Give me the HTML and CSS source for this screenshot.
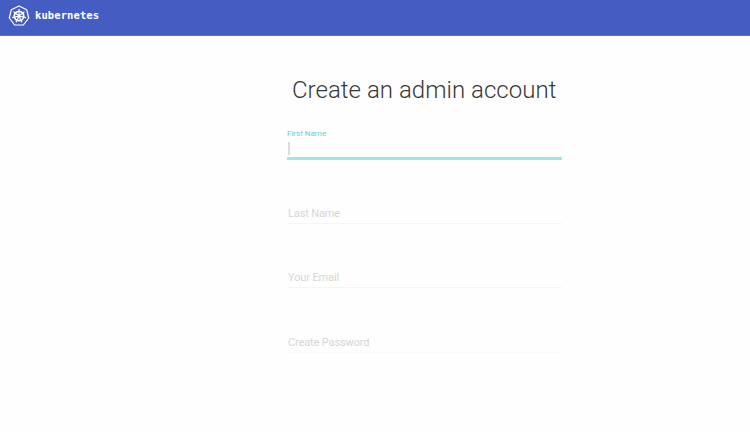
FILE: index.html
```
<!DOCTYPE html>
<html lang="en">
<head>
<meta charset="utf-8">
<title>Create an admin account</title>
<link rel="stylesheet" href="styles.css">
</head>
<body>
<header class="topbar">
  <svg class="logo" viewBox="0 0 22 22" fill="none" stroke="#fff" stroke-linejoin="round">
    <path d="M11 1 18.7 4.7 20.7 13 15.4 20H6.6L1.3 13 3.3 4.7Z" stroke-width="1.2"/>
    <circle cx="11" cy="11" r="4.7" stroke-width="1.7"/>
    <path d="M11 4V11M16.5 6.6 11 11M17.9 12.6 11 11M14 17.3 11 11M8 17.3 11 11M4.1 12.6 11 11M5.5 6.6 11 11" stroke-width="1.2"/>
  </svg>
  <span class="brand">kubernetes</span>
</header>
<main class="form">
  <h1 class="title">Create an admin account</h1>
  <div class="field active">
    <span class="label">First Name</span>
    <span class="caret"></span>
  </div>
  <div class="field"><span class="label">Last Name</span></div>
  <div class="field"><span class="label">Your Email</span></div>
  <div class="field last"><span class="label">Create Password</span></div>
</main>
</body>
</html>
```
FILE: styles.css
```
* { box-sizing: border-box; }
body {
  margin: 0;
  height: 432px;
  overflow: hidden;
  background: #fefefe;
  font-family: Roboto, sans-serif;
}
.topbar {
  height: 36px;
  padding: 0 8px 4px;
  display: flex;
  align-items: center;
  gap: 5px;
  background: #455dc2;
  border-bottom: 1px solid #5a6fc8;
}
.logo { width: 22px; height: 22px; }
.brand {
  color: #fff;
  font: bold 10.5px/14px "DejaVu Sans Mono", monospace;
  letter-spacing: 0.1px;
  margin-top: -1px;
}
.form {
  width: 275px;
  margin-left: 287px;
  padding-top: 38px;
}
.title {
  margin: 0;
  padding: 1px 0 0 5px;
  font-size: 24px;
  line-height: 31px;
  font-weight: 300;
  letter-spacing: 0.03px;
  color: #383838;
  white-space: nowrap;
}
.field {
  height: 64px;
  display: flex;
  flex-direction: column;
  justify-content: flex-end;
  border-bottom: 1px solid #f5f5f5;
}
.label {
  padding: 0 0 3px 1px;
  font-size: 11px;
  line-height: 13px;
  letter-spacing: -0.13px;
  color: #d6d6d6;
}
.active {
  height: 54px;
  border-bottom: 3px solid #a1e5ea;
}
.active .label {
  padding: 0;
  font-size: 8px;
  line-height: 10px;
  letter-spacing: 0;
  color: #62d0d8;
}
.caret {
  width: 2px;
  height: 13px;
  margin: 3px 0 2px 1px;
  background: #dcdcdc;
}
.last { height: 65px; border-color: #fafafa; }
```
